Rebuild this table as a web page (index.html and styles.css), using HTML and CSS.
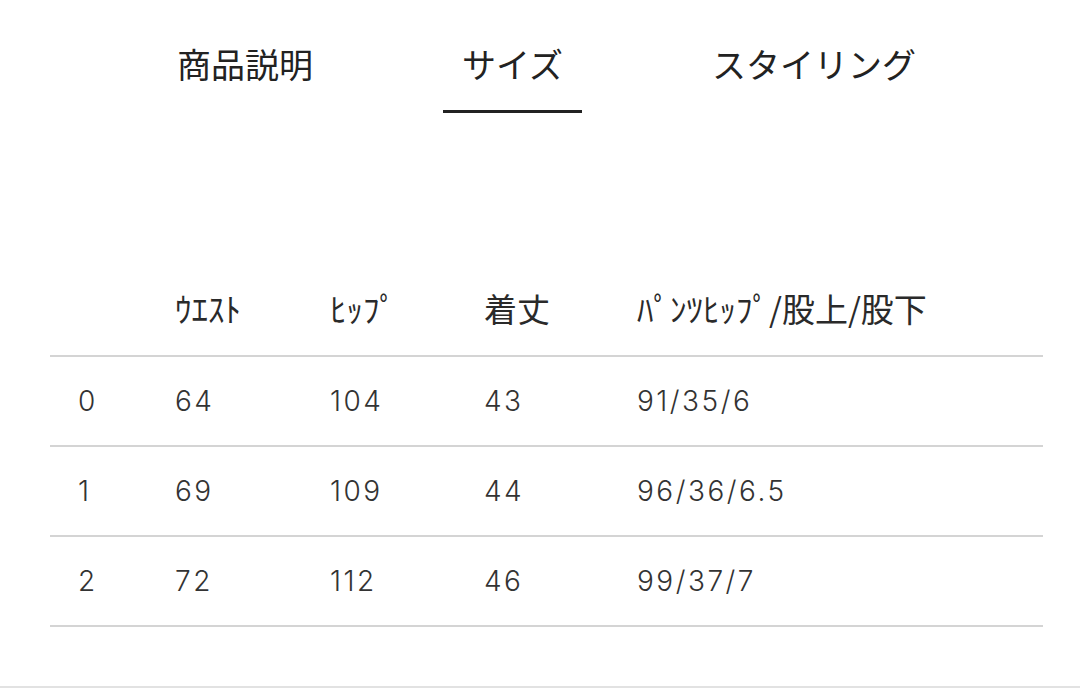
FILE: index.html
```html
<!DOCTYPE html>
<html lang="ja">
<head>
<meta charset="utf-8">
<title>サイズ</title>
<link rel="stylesheet" href="styles.css">
</head>
<body>
<div class="page">
  <nav class="tabs">
    <div class="tab">商品説明</div>
    <div class="tab active">サイズ</div>
    <div class="tab">スタイリング</div>
  </nav>
  <table class="size-table">
    <colgroup>
      <col class="c0"><col class="c1"><col class="c2"><col class="c3"><col class="c4">
    </colgroup>
    <thead>
      <tr>
        <th></th>
        <th>ｳｴｽﾄ</th>
        <th>ﾋｯﾌﾟ</th>
        <th>着丈</th>
        <th>ﾊﾟﾝﾂﾋｯﾌﾟ/股上/股下</th>
      </tr>
    </thead>
    <tbody>
      <tr><td>0</td><td>64</td><td>104</td><td>43</td><td>91/35/6</td></tr>
      <tr><td>1</td><td>69</td><td>109</td><td>44</td><td>96/36/6.5</td></tr>
      <tr><td>2</td><td>72</td><td>112</td><td>46</td><td>99/37/7</td></tr>
    </tbody>
  </table>
</div>
</body>
</html>
```

FILE: styles.css
```css
html, body {
  margin: 0;
  padding: 0;
  background: #ffffff;
}

.page {
  box-sizing: border-box;
  height: 688px;
  border-bottom: 2px solid #e2e2e2;
  overflow: hidden;
  font-family: "Noto Sans CJK JP", "Noto Sans", sans-serif;
  color: #222222;
}

.tabs {
  display: flex;
  gap: 111px;
  padding-left: 158px;
  padding-top: 47px;
}

.tab {
  font-size: 34px;
  line-height: 34px;
  padding: 0 19px 29px;
  border-bottom: 3px solid transparent;
  white-space: nowrap;
}

.tab.active {
  border-bottom-color: #222222;
}

.size-table {
  margin: 153px 0 0 50px;
  width: 993px;
  border-collapse: collapse;
  table-layout: fixed;
}

.c0 { width: 97px; }
.c1 { width: 155px; }
.c2 { width: 154px; }
.c3 { width: 153px; }

.size-table th,
.size-table td {
  text-align: left;
  padding: 0 0 0 28px;
  white-space: nowrap;
  border-bottom: 2px solid #d4d4d4;
}

.size-table th {
  height: 90px;
  box-sizing: border-box;
  padding-bottom: 6px;
  font-weight: 400;
  font-size: 33px;
  color: #2a2a2a;
  font-family: "Noto Sans CJK JP", sans-serif;
}

.size-table td {
  height: 88px;
  font-family: "Inter", "DejaVu Sans", sans-serif;
  font-size: 28px;
  font-weight: 300;
  letter-spacing: 2.5px;
  color: #333333;
}
```
